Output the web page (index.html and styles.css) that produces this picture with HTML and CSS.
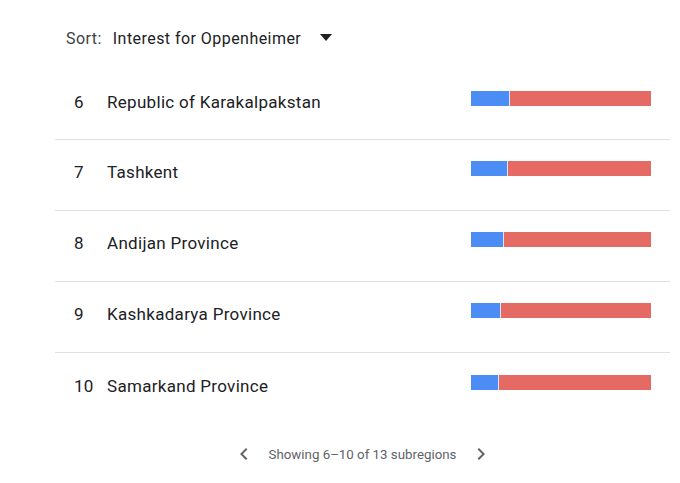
FILE: index.html
```html
<!DOCTYPE html>
<html lang="en">
<head>
    <meta charset="UTF-8">
    <title>Subregions - Oppenheimer</title>
    <link rel="stylesheet" href="styles.css">
</head>
<body>

<div class="panel">
    <!-- Sort selector -->
    <div class="sort">
        <span class="sort-label">Sort:</span>
        <span class="sort-value">Interest for Oppenheimer</span>
        <span class="sort-arrow"></span>
    </div>

    <!-- Region list -->
    <ul class="regions">
        <li class="region">
            <span class="rank">6</span>
            <span class="name">Republic of Karakalpakstan</span>
            <div class="bar"><div class="bar-a" style="width: 38px"></div><div class="bar-b"></div></div>
        </li>
        <li class="region">
            <span class="rank">7</span>
            <span class="name">Tashkent</span>
            <div class="bar"><div class="bar-a" style="width: 36px"></div><div class="bar-b"></div></div>
        </li>
        <li class="region">
            <span class="rank">8</span>
            <span class="name">Andijan Province</span>
            <div class="bar"><div class="bar-a" style="width: 32px"></div><div class="bar-b"></div></div>
        </li>
        <li class="region">
            <span class="rank">9</span>
            <span class="name">Kashkadarya Province</span>
            <div class="bar"><div class="bar-a" style="width: 29px"></div><div class="bar-b"></div></div>
        </li>
        <li class="region">
            <span class="rank">10</span>
            <span class="name">Samarkand Province</span>
            <div class="bar"><div class="bar-a" style="width: 27px"></div><div class="bar-b"></div></div>
        </li>
    </ul>

    <!-- Pagination -->
    <div class="pager">
        <svg class="chev" width="24" height="24" viewBox="0 0 24 24"><path d="M15.4 7.4 14 6l-6 6 6 6 1.4-1.4L10.8 12z" fill="#5f6368"/></svg>
        <span class="pager-text">Showing 6–10 of 13 subregions</span>
        <svg class="chev" width="24" height="24" viewBox="0 0 24 24"><path d="M8.6 7.4 10 6l6 6-6 6-1.4-1.4 4.6-4.6z" fill="#5f6368"/></svg>
    </div>
</div>

</body>
</html>
```

FILE: styles.css
```css
/* Page */
body {
    margin: 0;
    background: #fff;
    font-family: Roboto, 'Open Sans', sans-serif;
    color: #202124;
}

.panel {
    width: 615px;
    padding-left: 55px;
    padding-top: 26px;
}

/* Sort selector */
.sort {
    display: flex;
    align-items: center;
    height: 24px;
    padding-left: 11px;
    font-size: 16px;
    letter-spacing: 0.45px;
}

.sort-label {
    color: #3c4043;
    margin-right: 11px;
}

.sort-value {
    color: #202124;
}

.sort-arrow {
    width: 0;
    height: 0;
    margin-left: 19px;
    margin-top: -2px;
    border-left: 6px solid transparent;
    border-right: 6px solid transparent;
    border-top: 7px solid #202124;
}

/* Region rows */
.regions {
    list-style: none;
    margin: 20px 0 0;
    padding: 0;
}

.region {
    display: flex;
    align-items: center;
    height: 70px;
    padding-bottom: 6px;
    box-sizing: border-box;
    border-bottom: 1px solid #e0e0e0;
    font-size: 17px;
    letter-spacing: 0.3px;
}

.region + .region {
    height: 71px;
}

.region:last-child {
    border-bottom: none;
}

.rank {
    width: 33px;
    padding-left: 19px;
}

.name {
    flex: 1;
}

.bar {
    display: flex;
    width: 180px;
    height: 15px;
    margin-right: 19px;
    margin-bottom: 7px;
}

.bar-a {
    background: #4c8df5;
    border-right: 1px solid #dde6f5;
}

.bar-b {
    flex: 1;
    background: #e56a63;
}

/* Pagination */
.pager {
    display: flex;
    align-items: center;
    justify-content: center;
    gap: 10px;
    margin-top: 18px;
    font-size: 13.3px;
    color: #5f6368;
}

.pager-text {
    margin: 0 3px;
}
```
